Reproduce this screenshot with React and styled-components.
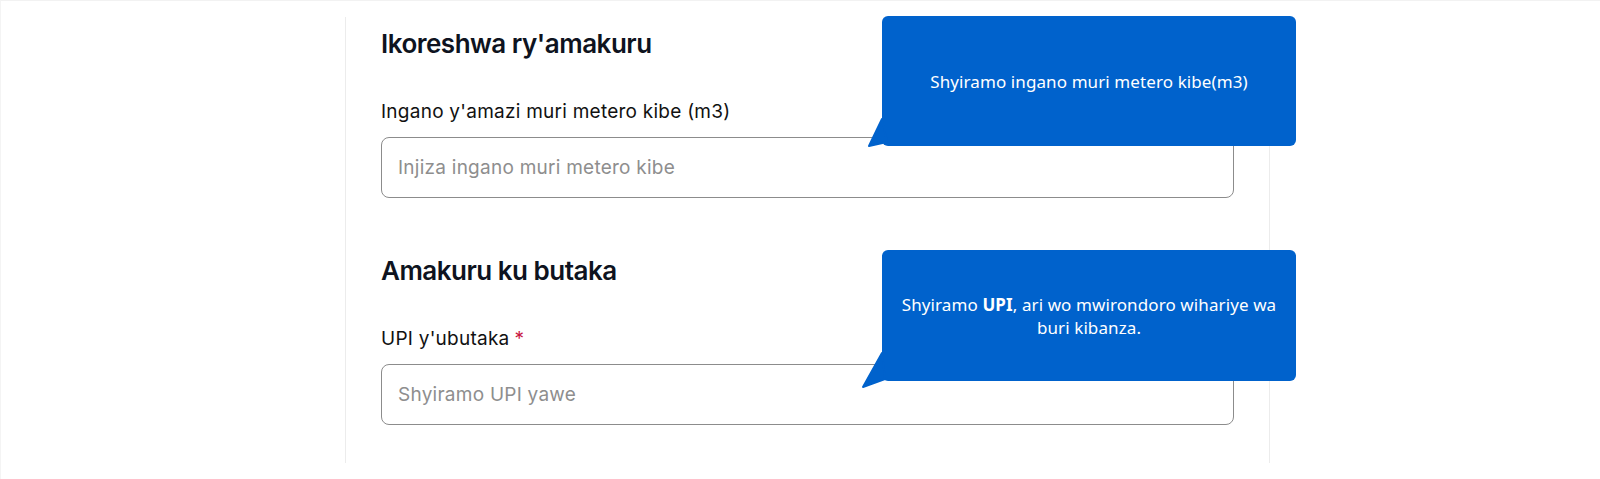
import React from "react";
import styled, { createGlobalStyle } from "styled-components";

const GlobalStyle = createGlobalStyle`
  html, body {
    margin: 0;
    padding: 0;
    background: #ffffff;
  }
  body {
    font-family: Inter, "Liberation Sans", sans-serif;
  }
`;

const Page = styled.div`
  width: 1600px;
  height: 479px;
  box-sizing: border-box;
  border-top: 1px solid #f2f2f2;
  border-left: 1px solid #f4f4f4;
  padding-top: 16px;
  overflow: hidden;
`;

const Card = styled.div`
  margin-left: 344px;
  width: 925px;
  height: 446px;
  box-sizing: border-box;
  border-left: 1px solid #ececec;
  border-right: 1px solid #ececec;
  padding: 11px 35px 0 35px;
`;

const Section = styled.section`
  position: relative;
  margin-top: ${(props) => props.$gap || 0}px;
`;

const Heading = styled.h2`
  margin: 0;
  font-family: Inter, "Liberation Sans", sans-serif;
  font-size: 26px;
  line-height: 32px;
  font-weight: 600;
  letter-spacing: -0.5px;
  color: #0e1320;
`;

const Label = styled.label`
  display: block;
  margin-top: 40px;
  font-size: 19px;
  line-height: 24px;
  font-weight: 400;
  letter-spacing: 0.25px;
  color: #111111;
`;

const Required = styled.span`
  color: #c8163f;
  margin-left: 5px;
`;

const Input = styled.input`
  display: block;
  width: 100%;
  height: 61px;
  margin-top: 13px;
  box-sizing: border-box;
  border: 1px solid #8c8c8c;
  border-radius: 8px;
  padding: 0 16px;
  font-family: Inter, "Liberation Sans", sans-serif;
  font-size: 19px;
  letter-spacing: 0.25px;
  color: #111111;
  background: #ffffff;
  outline: none;
  &::placeholder {
    color: #8e8e8e;
  }
`;

const Tooltip = styled.div`
  position: absolute;
  left: 501px;
  top: ${(props) => props.$top}px;
  width: 414px;
  height: ${(props) => props.$height}px;
  box-sizing: border-box;
  padding: 0 15px;
  display: flex;
  align-items: center;
  justify-content: center;
  text-align: center;
  background: #0062cc;
  border-radius: 6px;
  color: #ffffff;
  font-family: "Noto Sans", "Open Sans", sans-serif;
  font-size: 17px;
  line-height: 23px;
  letter-spacing: 0.1px;
  z-index: 2;
  b {
    font-weight: 700;
  }
`;

const Tail = styled.svg`
  position: absolute;
  left: -24px;
  bottom: -12px;
  width: 32px;
  height: 44px;
  overflow: visible;
`;

function Bubble({ top, height, tail, children }) {
  return (
    <Tooltip $top={top} $height={height}>
      <Tail viewBox="-24 -32 32 44">
        <polygon
          points={tail}
          fill="#0062cc"
          stroke="#0062cc"
          strokeWidth="2"
          strokeLinejoin="round"
        />
      </Tail>
      {children}
    </Tooltip>
  );
}

export default function App() {
  return (
    <>
      <GlobalStyle />
      <Page>
        <Card>
          <Section>
            <Heading>Ikoreshwa ry'amakuru</Heading>
            <Label>Ingano y'amazi muri metero kibe (m3)</Label>
            <Input placeholder="Injiza ingano muri metero kibe" />
            <Bubble top={-12} height={130} tail="0,-27 -13,0 5,-4">
              Shyiramo ingano muri metero kibe(m3)
            </Bubble>
          </Section>
          <Section $gap={57}>
            <Heading>Amakuru ku butaka</Heading>
            <Label>
              UPI y'ubutaka<Required>*</Required>
            </Label>
            <Input placeholder="Shyiramo UPI yawe" />
            <Bubble top={-5} height={131} tail="0,-28 -19,6 3,-2">
              <span>
                Shyiramo <b>UPI</b>, ari wo mwirondoro wihariye wa buri kibanza.
              </span>
            </Bubble>
          </Section>
        </Card>
      </Page>
    </>
  );
}
